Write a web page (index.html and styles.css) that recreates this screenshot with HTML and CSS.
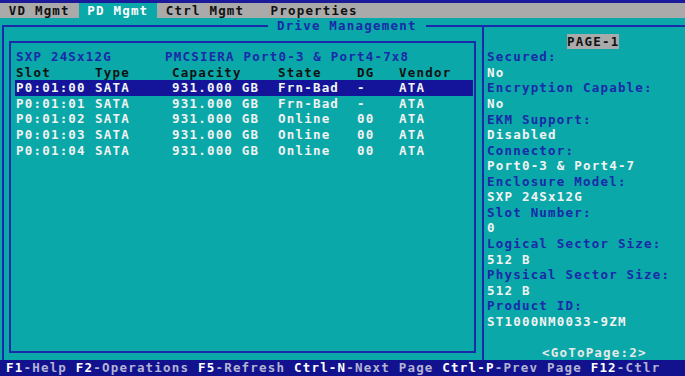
FILE: index.html
```html
<!DOCTYPE html>
<html lang="en">
<head>
    <meta charset="UTF-8">
    <meta name="viewport" content="width=device-width, initial-scale=1.0">
    <title>PD Mgmt</title>
    <link rel="stylesheet" href="styles.css">
</head>
<body>
    <div class="titlebar"></div>

    <!-- Menu -->
    <nav class="menu"><span> VD Mgmt </span><span class="tab-active"> PD Mgmt </span><span> Ctrl Mgmt   Properties</span></nav>

    <!-- Drive Management -->
    <div class="main">
        <div class="frame">
            <span class="frame-title">Drive Management</span>

            <section class="drive-pane">
                <div class="drive-box">
                    <div class="enclosure"><span>SXP 24Sx12G</span><span>PMCSIERA Port0-3 &amp; Port4-7x8</span></div>
                    <div class="drive-row drive-head">
                        <span>Slot</span><span>Type</span><span>Capacity</span><span>State</span><span>DG</span><span>Vendor</span>
                    </div>
                    <div class="drive-row selected">
                        <span>P0:01:00</span><span>SATA</span><span>931.000 GB</span><span>Frn-Bad</span><span>-</span><span>ATA</span>
                    </div>
                    <div class="drive-row">
                        <span>P0:01:01</span><span>SATA</span><span>931.000 GB</span><span>Frn-Bad</span><span>-</span><span>ATA</span>
                    </div>
                    <div class="drive-row">
                        <span>P0:01:02</span><span>SATA</span><span>931.000 GB</span><span>Online</span><span>00</span><span>ATA</span>
                    </div>
                    <div class="drive-row">
                        <span>P0:01:03</span><span>SATA</span><span>931.000 GB</span><span>Online</span><span>00</span><span>ATA</span>
                    </div>
                    <div class="drive-row">
                        <span>P0:01:04</span><span>SATA</span><span>931.000 GB</span><span>Online</span><span>00</span><span>ATA</span>
                    </div>
                </div>
            </section>

            <!-- Properties of selected drive -->
            <aside class="info">
                <div class="page"><span class="page-badge">PAGE-1</span></div>
                <div class="label">Secured:</div>
                <div class="value">No</div>
                <div class="label">Encryption Capable:</div>
                <div class="value">No</div>
                <div class="label">EKM Support:</div>
                <div class="value">Disabled</div>
                <div class="label">Connector:</div>
                <div class="value">Port0-3 &amp; Port4-7</div>
                <div class="label">Enclosure Model:</div>
                <div class="value">SXP 24Sx12G</div>
                <div class="label">Slot Number:</div>
                <div class="value">0</div>
                <div class="label">Logical Sector Size:</div>
                <div class="value">512 B</div>
                <div class="label">Physical Sector Size:</div>
                <div class="value">512 B</div>
                <div class="label">Product ID:</div>
                <div class="value">ST1000NM0033-9ZM</div>
                <div class="goto">&lt;GoToPage:2&gt;</div>
            </aside>
        </div>
    </div>

    <!-- Statusbalk -->
    <footer class="status"><b>F1</b>-Help <b>F2</b>-Operations <b>F5</b>-Refresh <b>Ctrl-N</b>-Next Page <b>Ctrl-P</b>-Prev Page <b>F12</b>-Ctlr</footer>
</body>
</html>
```

FILE: styles.css
```css
body {
    margin: 0;
    padding: 0;
    background-color: #0aa8a8;
    font-family: "DejaVu Sans Mono", "Liberation Mono", monospace;
    font-weight: bold;
    font-size: 12.5px;
    letter-spacing: 1.2px;
    line-height: 15.56px;
    overflow: hidden;
}
.titlebar {
    height: 3px;
    background-color: #1a1a9a;
}
.menu {
    height: 15px;
    line-height: 15px;
    background-color: #aaaaaa;
    color: #111;
    white-space: pre;
}
.tab-active {
    background-color: #0aa8a8;
    color: #fff;
}
.main {
    height: 342px;
    padding-top: 7px;
    box-sizing: border-box;
}
.frame {
    position: relative;
    display: flex;
    height: 333px;
    margin-left: 2px;
    border-top: 2px solid #1a2aa8;
    border-left: 2px solid #1a2aa8;
}
.frame-title {
    position: absolute;
    top: -8.8px;
    left: 264px;
    padding: 0 9px;
    background-color: #0aa8a8;
    color: #1a2aa8;
}
.drive-pane {
    width: 478px;
}
.drive-box {
    height: 312px;
    box-sizing: border-box;
    margin: 14px 6px 7px 5px;
    padding: 6.2px 1px 0 4px;
    border: 2px solid #1a2aa8;
}
.enclosure {
    display: grid;
    grid-template-columns: 149px auto;
    padding-left: 1px;
    color: #1a2aa8;
}
.drive-row {
    display: grid;
    grid-template-columns: 79px 77px 106px 79px 42px auto;
    padding-left: 1px;
    color: #f2f2f2;
}
.drive-head {
    color: #111;
}
.selected {
    background-color: #14149a;
}
.info {
    flex: 1;
    border-left: 2px solid #1a2aa8;
    padding: 6.7px 0 0 3px;
}
.page {
    padding-left: 80px;
}
.page-badge {
    background-color: #aaaaaa;
    color: #111;
}
.label {
    color: #1a2aa8;
}
.value {
    color: #f2f2f2;
}
.goto {
    margin-top: 15.56px;
    padding-left: 55px;
    color: #e8e8e8;
}
.status {
    height: 16px;
    line-height: 16px;
    padding-left: 6px;
    background-color: #12128f;
    color: #b4b4d4;
    white-space: pre;
}
.status b {
    color: #fff;
}
```
